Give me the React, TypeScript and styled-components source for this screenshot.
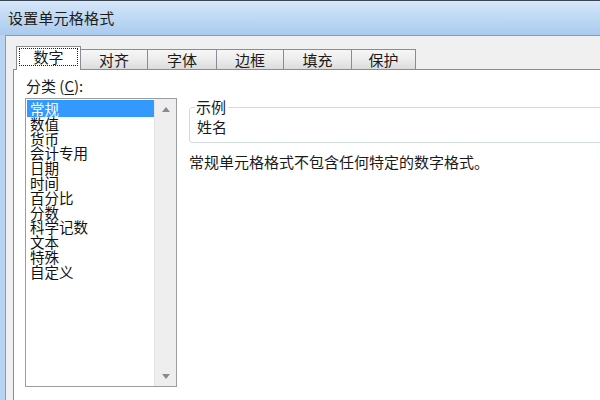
import React from 'react'
import styled, { createGlobalStyle } from 'styled-components'

const GlobalStyle = createGlobalStyle`
  html, body {
    margin: 0;
    padding: 0;
    background: #ffffff;
  }
  body {
    font-family: "Noto Sans CJK SC", "Noto Sans", sans-serif;
    color: #1a1a1a;
  }
`

const Window = styled.div`
  width: 600px;
  height: 400px;
  overflow: hidden;
  display: flex;
  flex-direction: column;
  background: #b8d4f2;
`

const TitleBar = styled.div`
  height: 35px;
  flex-shrink: 0;
  border-top: 1px solid #3a4656;
  background: linear-gradient(#d6e7f9, #c0daf4 45%, #aacbee);
  display: flex;
  align-items: center;
  padding: 0 0 2px 8px;
  box-sizing: border-box;
  font-size: 15px;
  letter-spacing: 0.2px;
  color: #1c1c1c;
`

const Body = styled.div`
  flex: 1;
  display: flex;
  padding-left: 5px;
  min-height: 0;
`

const Panel = styled.div`
  flex: 1;
  display: flex;
  flex-direction: column;
  background: #f0f0f0;
  border-left: 1px solid #8e9aa8;
  border-top: 1px solid #8e9aa8;
  padding: 10px 0 0 7px;
  min-height: 0;
`

const TabRow = styled.div`
  display: flex;
  align-items: flex-end;
  padding-left: 3px;
  height: 24px;
  position: relative;
  z-index: 1;
  margin-bottom: -1px;
`

const Tab = styled.div<{ $w: number; $active?: boolean }>`
  width: ${p => p.$w}px;
  height: ${p => (p.$active ? 24 : 21)}px;
  box-sizing: border-box;
  border: 1px solid #898c95;
  border-bottom: ${p => (p.$active ? 'none' : '1px solid #898c95')};
  margin-left: -1px;
  display: flex;
  align-items: center;
  justify-content: center;
  font-size: 15px;
  color: #1a1a1a;
  background: ${p =>
    p.$active ? '#ffffff' : 'linear-gradient(#f7f7f7, #ececec 50%, #dcdcdc)'};
  &:first-child {
    margin-left: 0;
  }
`

const Focus = styled.span`
  border: 1px dotted #222;
  box-sizing: border-box;
  width: 59px;
  height: 18px;
  line-height: 16px;
  margin-top: -3px;
  text-align: center;
`

const TabPage = styled.div`
  flex: 1;
  background: #ffffff;
  border-top: 1px solid #898c95;
  border-left: 1px solid #898c95;
  display: flex;
  padding: 6px 0 0 11px;
  min-height: 0;
  overflow: hidden;
`

const LeftCol = styled.div`
  width: 152px;
  flex-shrink: 0;
  display: flex;
  flex-direction: column;
`

const FieldLabel = styled.div`
  font-size: 15px;
  line-height: 20px;
  height: 22px;
  padding-left: 1px;
  color: #1a1a1a;
`

const Key = styled.span`
  text-decoration: underline;
  text-underline-offset: 2px;
`

const ListBox = styled.div`
  height: 289px;
  box-sizing: border-box;
  border: 1px solid #9a9da3;
  display: flex;
`

const Items = styled.div`
  flex: 1;
  padding: 1px 0 0 1px;
`

const Item = styled.div<{ $selected?: boolean }>`
  font-size: 14.5px;
  line-height: 14.8px;
  height: 14.8px;
  padding: 2px 0 0 3px;
  margin-bottom: -2px;
  white-space: nowrap;
  color: ${p => (p.$selected ? '#ffffff' : '#111111')};
  background: ${p => (p.$selected ? '#3399ff' : 'transparent')};
`

const ScrollBar = styled.div`
  width: 21px;
  background: #eeeeee;
  border-left: 1px solid #e4e4e4;
  display: flex;
  flex-direction: column;
  justify-content: space-between;
  align-items: center;
  padding: 8px 0 7px;
`

const RightCol = styled.div`
  width: 440px;
  flex-shrink: 0;
  margin-left: 12px;
  padding-top: 23px;
`

const Group = styled.fieldset`
  margin: 0;
  padding: 2px 6px 5px;
  border: 1px solid #d3dbe2;
  border-radius: 3px;
`

const Legend = styled.legend`
  font-size: 15px;
  line-height: 16px;
  padding: 0 2px 0 1px;
  margin-left: -1px;
  color: #1a1a1a;
`

const Sample = styled.div`
  font-size: 15px;
  line-height: 20px;
  padding-left: 1px;
`

const Desc = styled.div`
  font-size: 15px;
  line-height: 18px;
  margin-top: 10px;
  color: #1a1a1a;
`

const Arrow = ({ up }: { up?: boolean }) => (
  <svg width="8" height="5" viewBox="0 0 8 5">
    <path d={up ? 'M0 5 L4 0 L8 5 Z' : 'M0 0 L8 0 L4 5 Z'} fill="#8a8a8a" />
  </svg>
)

const tabs = [
  { label: '数字', w: 65 },
  { label: '对齐', w: 68 },
  { label: '字体', w: 70 },
  { label: '边框', w: 68 },
  { label: '填充', w: 69 },
  { label: '保护', w: 65 },
]

const categories = [
  '常规',
  '数值',
  '货币',
  '会计专用',
  '日期',
  '时间',
  '百分比',
  '分数',
  '科学记数',
  '文本',
  '特殊',
  '自定义',
]

const App = () => {
  return (
    <>
      <GlobalStyle />
      <Window>
        <TitleBar>设置单元格格式</TitleBar>
        <Body>
          <Panel>
            <TabRow>
              {tabs.map((t, i) => (
                <Tab key={t.label} $w={t.w} $active={i === 0}>
                  {i === 0 ? <Focus>{t.label}</Focus> : t.label}
                </Tab>
              ))}
            </TabRow>
            <TabPage>
              <LeftCol>
                <FieldLabel>
                  分类 (<Key>C</Key>):
                </FieldLabel>
                <ListBox>
                  <Items>
                    {categories.map((c, i) => (
                      <Item key={c} $selected={i === 0}>
                        {c}
                      </Item>
                    ))}
                  </Items>
                  <ScrollBar>
                    <Arrow up />
                    <Arrow />
                  </ScrollBar>
                </ListBox>
              </LeftCol>
              <RightCol>
                <Group>
                  <Legend>示例</Legend>
                  <Sample>姓名</Sample>
                </Group>
                <Desc>常规单元格格式不包含任何特定的数字格式。</Desc>
              </RightCol>
            </TabPage>
          </Panel>
        </Body>
      </Window>
    </>
  )
}

export default App
